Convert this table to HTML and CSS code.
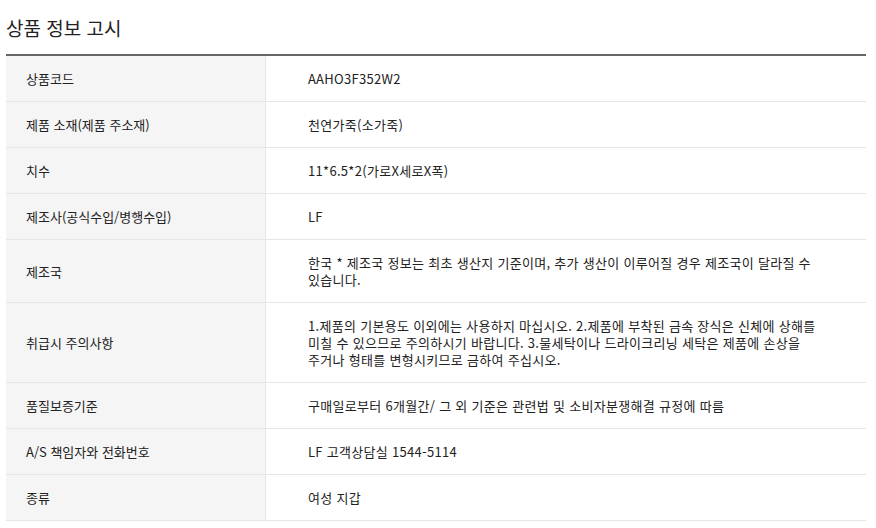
FILE: index.html
```html
<!DOCTYPE html>
<html lang="ko">

<head>
    <meta charset="UTF-8">
    <meta name="viewport" content="width=device-width, initial-scale=1.0">
    <title>상품 정보 고시</title>
    <link rel="stylesheet" href="styles.css">
</head>

<body>
    <div class="notice">
        <h2 class="notice-title">상품 정보 고시</h2>
        <table class="info-table">
            <tr>
                <th>상품코드</th>
                <td>AAHO3F352W2</td>
            </tr>
            <tr>
                <th>제품 소재(제품 주소재)</th>
                <td>천연가죽(소가죽)</td>
            </tr>
            <tr>
                <th>치수</th>
                <td>11*6.5*2(가로X세로X폭)</td>
            </tr>
            <tr>
                <th>제조사(공식수입/병행수입)</th>
                <td>LF</td>
            </tr>
            <tr>
                <th>제조국</th>
                <td>한국 * 제조국 정보는 최초 생산지 기준이며, 추가 생산이 이루어질 경우 제조국이 달라질 수 있습니다.</td>
            </tr>
            <tr>
                <th>취급시 주의사항</th>
                <td>1.제품의 기본용도 이외에는 사용하지 마십시오. 2.제품에 부착된 금속 장식은 신체에 상해를 미칠 수 있으므로 주의하시기 바랍니다. 3.물세탁이나 드라이크리닝 세탁은 제품에 손상을 주거나 형태를 변형시키므로 금하여 주십시오.</td>
            </tr>
            <tr>
                <th>품질보증기준</th>
                <td>구매일로부터 6개월간/ 그 외 기준은 관련법 및 소비자분쟁해결 규정에 따름</td>
            </tr>
            <tr>
                <th>A/S 책임자와 전화번호</th>
                <td>LF 고객상담실 1544-5114</td>
            </tr>
            <tr>
                <th>종류</th>
                <td>여성 지갑</td>
            </tr>
        </table>
    </div>
</body>

</html>
```

FILE: styles.css
```css
body {
    margin: 0;
    background: #fff;
    color: #222;
    font-family: "Noto Sans CJK KR", "Noto Sans", sans-serif;
}

.notice {
    width: 860px;
    padding: 0 10px 0 6px;
}

.notice-title {
    margin: 0;
    padding: 15px 0 13px;
    font-size: 19px;
    line-height: 26px;
    font-weight: normal;
    color: #222;
}

.info-table {
    width: 100%;
    border-collapse: collapse;
    border-top: 2px solid #666;
    font-size: 13px;
    line-height: 17px;
    word-break: keep-all;
}

.info-table th,
.info-table td {
    padding: 14px 0 14px;
    border-bottom: 1px solid #e6e6e6;
    text-align: left;
    font-weight: normal;
    vertical-align: middle;
}

.info-table th {
    width: 239px;
    padding-left: 20px;
    background: #f5f5f5;
    border-right: 1px solid #e6e6e6;
}

.info-table td {
    padding-left: 42px;
    padding-right: 36px;
    letter-spacing: 0.3px;
}
```
